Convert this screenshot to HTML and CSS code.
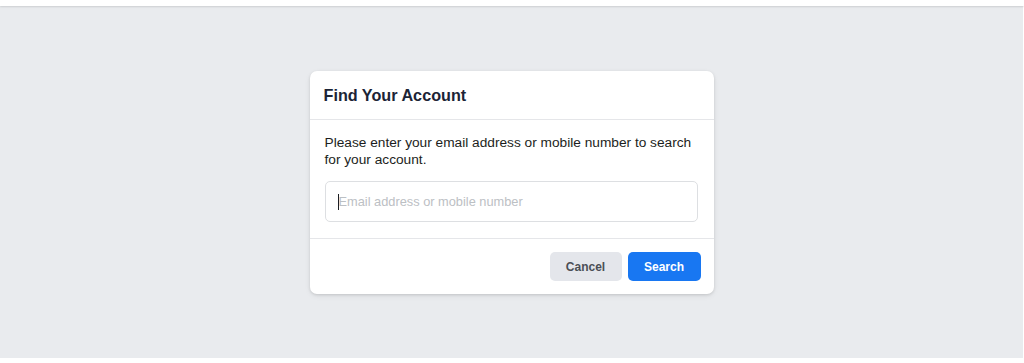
FILE: index.html
```html
<!DOCTYPE html>
<html lang="en">
<head>
<meta charset="utf-8">
<title>Find Your Account</title>
<link rel="stylesheet" href="styles.css">
</head>
<body>
<div class="topbar"></div>
<main class="stage">
  <section class="card">
    <header class="card-header">
      <h2 class="title">Find Your Account</h2>
    </header>
    <div class="card-body">
      <p class="desc">Please enter your email address or mobile number to search for your account.</p>
      <div class="field"><span class="caret"></span><span class="placeholder">Email address or mobile number</span></div>
    </div>
    <footer class="card-footer">
      <button class="btn btn-cancel" type="button">Cancel</button>
      <button class="btn btn-search" type="button">Search</button>
    </footer>
  </section>
</main>
</body>
</html>
```
FILE: styles.css
```css
html, body {
  margin: 0;
  padding: 0;
  background: #ffffff;
  font-family: "Liberation Sans", Arial, Helvetica, sans-serif;
}

.topbar {
  height: 6px;
  background: #ffffff;
  box-shadow: 0 1px 2px rgba(0, 0, 0, 0.12);
  position: relative;
  z-index: 1;
}

.stage {
  width: 1023px;
  height: 352px;
  background: #e9ebee;
  padding-top: 65px;
  box-sizing: border-box;
  display: flex;
  justify-content: center;
  align-items: flex-start;
}

.card {
  width: 404px;
  background: #ffffff;
  border-radius: 7px;
  box-shadow: 0 1px 3px rgba(0, 0, 0, 0.12), 0 2px 6px rgba(0, 0, 0, 0.06);
}

.card-header {
  padding: 14px 15px 14px 14px;
  border-bottom: 1px solid #e5e6e9;
}

.title {
  margin: 0;
  font-size: 16.2px;
  line-height: 20px;
  font-weight: bold;
  color: #1c2436;
}

.card-body {
  padding: 15px 16px 16px 15px;
  border-bottom: 1px solid #e5e6e9;
}

.desc {
  margin: 0 0 13px 0;
  font-size: 13.7px;
  line-height: 16.5px;
  color: #1c1e21;
}

.field {
  height: 41px;
  box-sizing: border-box;
  border: 1px solid #dddfe2;
  border-radius: 5px;
  display: flex;
  align-items: center;
  padding-left: 12px;
  font-size: 12.8px;
}

.caret {
  width: 1px;
  height: 16px;
  background: #1c1e21;
}

.placeholder {
  color: #bcc0c4;
}

.card-footer {
  padding: 13px 13px 13px 15px;
  display: flex;
  justify-content: flex-end;
  gap: 6px;
}

.btn {
  height: 29px;
  border: none;
  border-radius: 5px;
  font-family: "Liberation Sans", Arial, Helvetica, sans-serif;
  font-size: 12px;
  font-weight: bold;
  padding: 0;
  cursor: pointer;
}

.btn-cancel {
  width: 72px;
  background: #e4e6eb;
  color: #4b4f56;
}

.btn-search {
  width: 73px;
  background: #1877f2;
  color: #ffffff;
}
```
